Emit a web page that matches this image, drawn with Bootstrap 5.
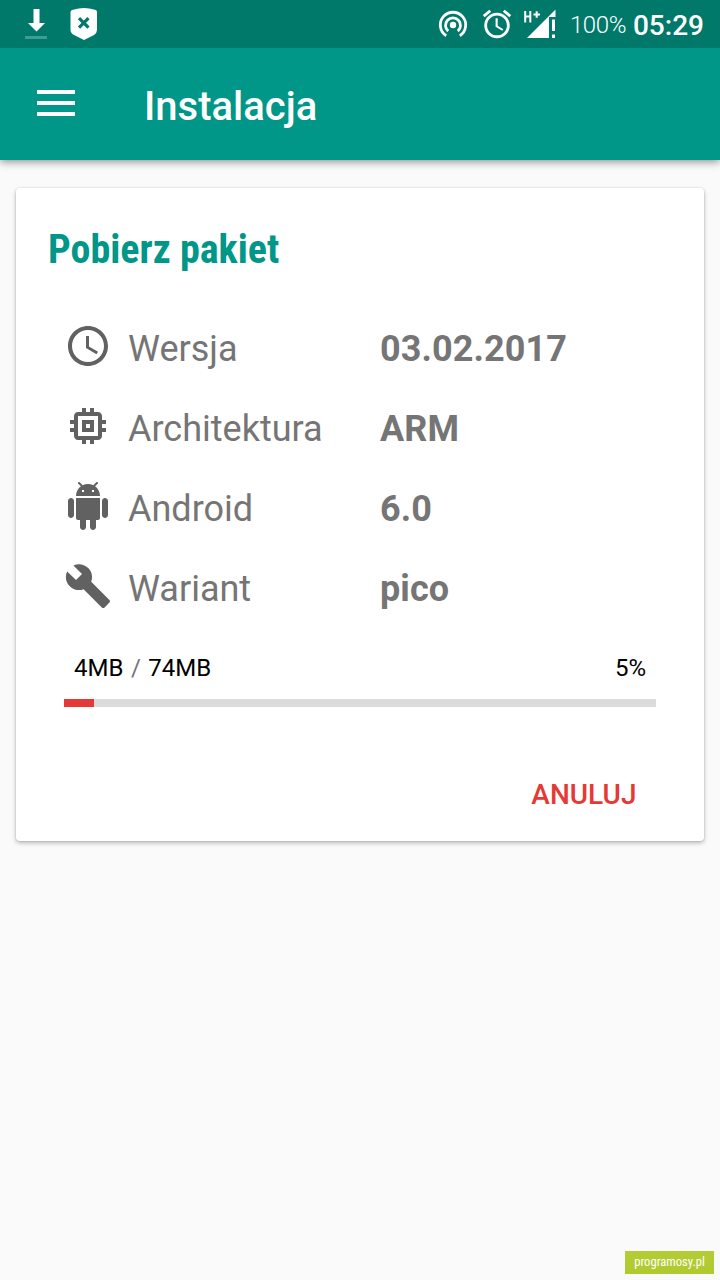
<!DOCTYPE html>
<html lang="pl">
<head>
<meta charset="utf-8">
<meta name="viewport" content="width=device-width, initial-scale=1">
<title>Instalacja</title>
<link href="https://cdn.jsdelivr.net/npm/bootstrap@5.3.0/dist/css/bootstrap.min.css" rel="stylesheet">
<style>
body{font-family:Roboto,sans-serif;background:#fafafa;height:1280px;overflow:hidden;line-height:1.2}
svg{display:block;flex:none}
.status-bar{height:48px;background:#00796b;color:#fff;z-index:1}
.battery{font-size:24px;font-weight:300;line-height:28px;letter-spacing:-.4px;margin:11px 0 0 14px;width:57px;white-space:nowrap}
.clock{font-size:28px;font-weight:500;line-height:32px;margin:10px 16px 0 6px}
.app-bar{height:112px;background:#009688;color:#fff;box-shadow:0 2px 8px rgba(0,0,0,.42);padding-left:37px}
.app-bar svg{margin-bottom:2px}
.app-title{font-size:40px;font-weight:500;line-height:48px;margin:6px 0 0 69px}
.package-card{margin:28px 16px 0;height:653px;border:0;border-radius:4px;box-shadow:0 2px 4px rgba(0,0,0,.28),0 0 2px rgba(0,0,0,.14)}
.package-title{font-family:"Roboto Condensed",Roboto,sans-serif;font-stretch:75%;font-size:40px;font-weight:700;line-height:48px;color:#009688;margin:38px 0 0 32px}
.facts{margin:32px 48px 0}
.fact{height:80px;font-size:36px;color:#757575}
.fact svg{fill:#616161;margin-right:16px}
.fact span,.fact strong{line-height:44px;padding-top:5px}
.fact strong{letter-spacing:.1px}
.fact span{width:252px}
.amounts{margin:28px 58px 0;font-size:24px;line-height:28px;color:#000;height:28px}
.amounts i{font-style:normal;color:#757575;margin:0 7.5px}
.progress.bar-track{height:8px;margin:17px 48px 0;border-radius:0;background:#dbdbdb}
.bar-track .progress-bar{background:#e53935}
.cancel{font-size:28px;font-weight:500;line-height:32px;color:#e53935;padding:0;border:0;margin:72px 67.5px 0 auto}
.site-tag{right:6px;bottom:6px;width:89px;height:23px;background:linear-gradient(#b4cd35,#b0c92f);color:#fff;font:12.6px/22px "Roboto Condensed",Roboto,sans-serif;font-stretch:75%}
</style>
</head>
<body>
<header>
<div class="status-bar position-relative d-flex align-items-start">
<svg width="24" height="48" viewBox="0 0 24 48" style="margin-left:24px"><path fill="#fff" d="M9.500 9h6v14H21l-8.500 8.500L4 23h5.500z"/><path fill="#409b90" d="M1 36h22v3H1z"/></svg>
<svg width="28" height="48" viewBox="0 0 28 48" style="margin-left:22px"><path fill="#fff" d="M.5 12Q.5 10 3 9.700Q9 8 14 8t11 1.700Q27 10 27 12v18q0 3-3 5l-10 5-10-5q-3.500-2-3.500-5z"/><path d="M9 18.200l9.500 9.500M18.500 18.200L9 27.700" stroke="#00796b" stroke-width="3.200" fill="none"/></svg>
<svg class="ms-auto" width="30" height="48" viewBox="438 0 30 48"><circle cx="453" cy="25" r="3.200" fill="#fff"/><path d="M448.200 31.200a7.500 7.500 0 1 1 9.600 0M446.200 35.700a12.700 12.700 0 1 1 13.600 0" fill="none" stroke="#fff" stroke-width="2.800"/></svg>
<svg width="34" height="34" viewBox="0 0 24 24" fill="#fff" style="margin:7px 0 0 12px"><path d="M22 5.720l-4.600-3.860-1.290 1.530 4.600 3.860L22 5.720zM7.880 3.390L6.600 1.860 2 5.710l1.290 1.530 4.590-3.850zM12.500 8H11v6l4.750 2.850.75-1.230-4-2.370V8zM12 4c-4.970 0-9 4.030-9 9s4.020 9 9 9c4.970 0 9-4.030 9-9s-4.030-9-9-9zm0 16c-3.870 0-7-3.130-7-7s3.130-7 7-7 7 3.130 7 7-3.130 7-7 7z"/></svg>
<svg width="32" height="48" viewBox="524 0 32 48" fill="#fff" style="margin-left:10px"><path d="M527 38l28.500-28.500V17H549v21z"/><path d="M552 19.500h3v11.500h-3zM552 34.500h3V38h-3z"/><path d="M525.200 11v11.500M530.300 11v11.500M525.200 16.600h5.100M533.500 14.500h6.500M536.700 11.200v6.600" stroke="#fff" stroke-width="2" fill="none"/></svg>
<span class="battery">100%</span>
<span class="clock">05:29</span>
</div>
<nav class="app-bar d-flex align-items-center">
<svg width="38" height="26" viewBox="0 0 38 26" fill="#fff"><path d="M0 0h38v4H0zM0 11h38v4H0zM0 22h38v4H0z"/></svg>
<h1 class="app-title mb-0">Instalacja</h1>
</nav>
</header>
<main class="card package-card">
<h2 class="package-title">Pobierz pakiet</h2>
<div class="facts">
<div class="fact d-flex align-items-center"><svg width="48" height="48" viewBox="0 0 24 24"><path d="M11.990 2C6.470 2 2 6.480 2 12s4.470 10 9.990 10C17.520 22 22 17.520 22 12S17.520 2 11.990 2zM12 20c-4.420 0-8-3.580-8-8s3.580-8 8-8 8 3.580 8 8-3.580 8-8 8zm.5-13H11v6l5.250 3.150.75-1.230-4.500-2.670z"/></svg><span>Wersja</span><strong>03.02.2017</strong></div>
<div class="fact d-flex align-items-center"><svg width="48" height="48" viewBox="0 0 24 24"><path d="M15 9H9v6h6V9zm-2 4h-2v-2h2v2zm8-2V9h-2V7c0-1.100-.9-2-2-2h-2V3h-2v2h-2V3H9v2H7c-1.100 0-2 .9-2 2v2H3v2h2v2H3v2h2v2c0 1.100.9 2 2 2h2v2h2v-2h2v2h2v-2h2c1.100 0 2-.9 2-2v-2h2v-2h-2v-2h2zm-4 6H7V7h10v10z"/></svg><span>Architektura</span><strong>ARM</strong></div>
<div class="fact d-flex align-items-center"><svg width="48" height="48" viewBox="0 0 24 24"><path d="M6 18c0 .55.45 1 1 1h1v3.500c0 .83.67 1.500 1.500 1.500s1.500-.67 1.500-1.500V19h2v3.500c0 .83.67 1.500 1.500 1.500s1.500-.67 1.500-1.500V19h1c.55 0 1-.45 1-1V8H6v10zM3.500 8C2.670 8 2 8.670 2 9.500v7c0 .83.67 1.500 1.500 1.500S5 17.330 5 16.500v-7C5 8.670 4.330 8 3.500 8zm17 0c-.83 0-1.500.67-1.500 1.500v7c0 .83.67 1.500 1.500 1.500s1.500-.67 1.500-1.500v-7c0-.83-.67-1.500-1.500-1.500zm-4.970-5.840l1.300-1.300c.2-.2.2-.51 0-.71-.2-.2-.51-.2-.71 0l-1.480 1.480C13.850 1.230 12.950 1 12 1c-.96 0-1.860.23-2.660.63L7.850.15c-.2-.2-.51-.2-.71 0-.2.2-.2.51 0 .71l1.310 1.310C6.970 3.260 6 5.010 6 7h12c0-1.990-.97-3.750-2.470-4.840zM10 5H9V4h1v1zm5 0h-1V4h1v1z"/></svg><span>Android</span><strong>6.0</strong></div>
<div class="fact d-flex align-items-center"><svg width="48" height="48" viewBox="0 0 24 24"><path d="M22.700 19l-9.100-9.100c.9-2.300.4-5-1.500-6.900-2-2-5-2.400-7.400-1.300L9 6 6 9 1.600 4.700C.4 7.100.9 10.100 2.900 12.100c1.900 1.900 4.600 2.400 6.900 1.500l9.100 9.100c.4.4 1 .4 1.400 0l2.300-2.300c.5-.4.5-1.100.1-1.400z"/></svg><span>Wariant</span><strong>pico</strong></div>
</div>
<div class="amounts d-flex"><div>4MB<i>/</i>74MB</div><div class="ms-auto">5%</div></div>
<div class="progress bar-track"><div class="progress-bar" style="width:5.070%"></div></div>
<button class="btn cancel">ANULUJ</button>
</main>
<div class="site-tag position-absolute text-center">programosy.pl</div>
<script src="https://cdn.jsdelivr.net/npm/bootstrap@5.3.0/dist/js/bootstrap.bundle.min.js"></script>
</body>
</html>
